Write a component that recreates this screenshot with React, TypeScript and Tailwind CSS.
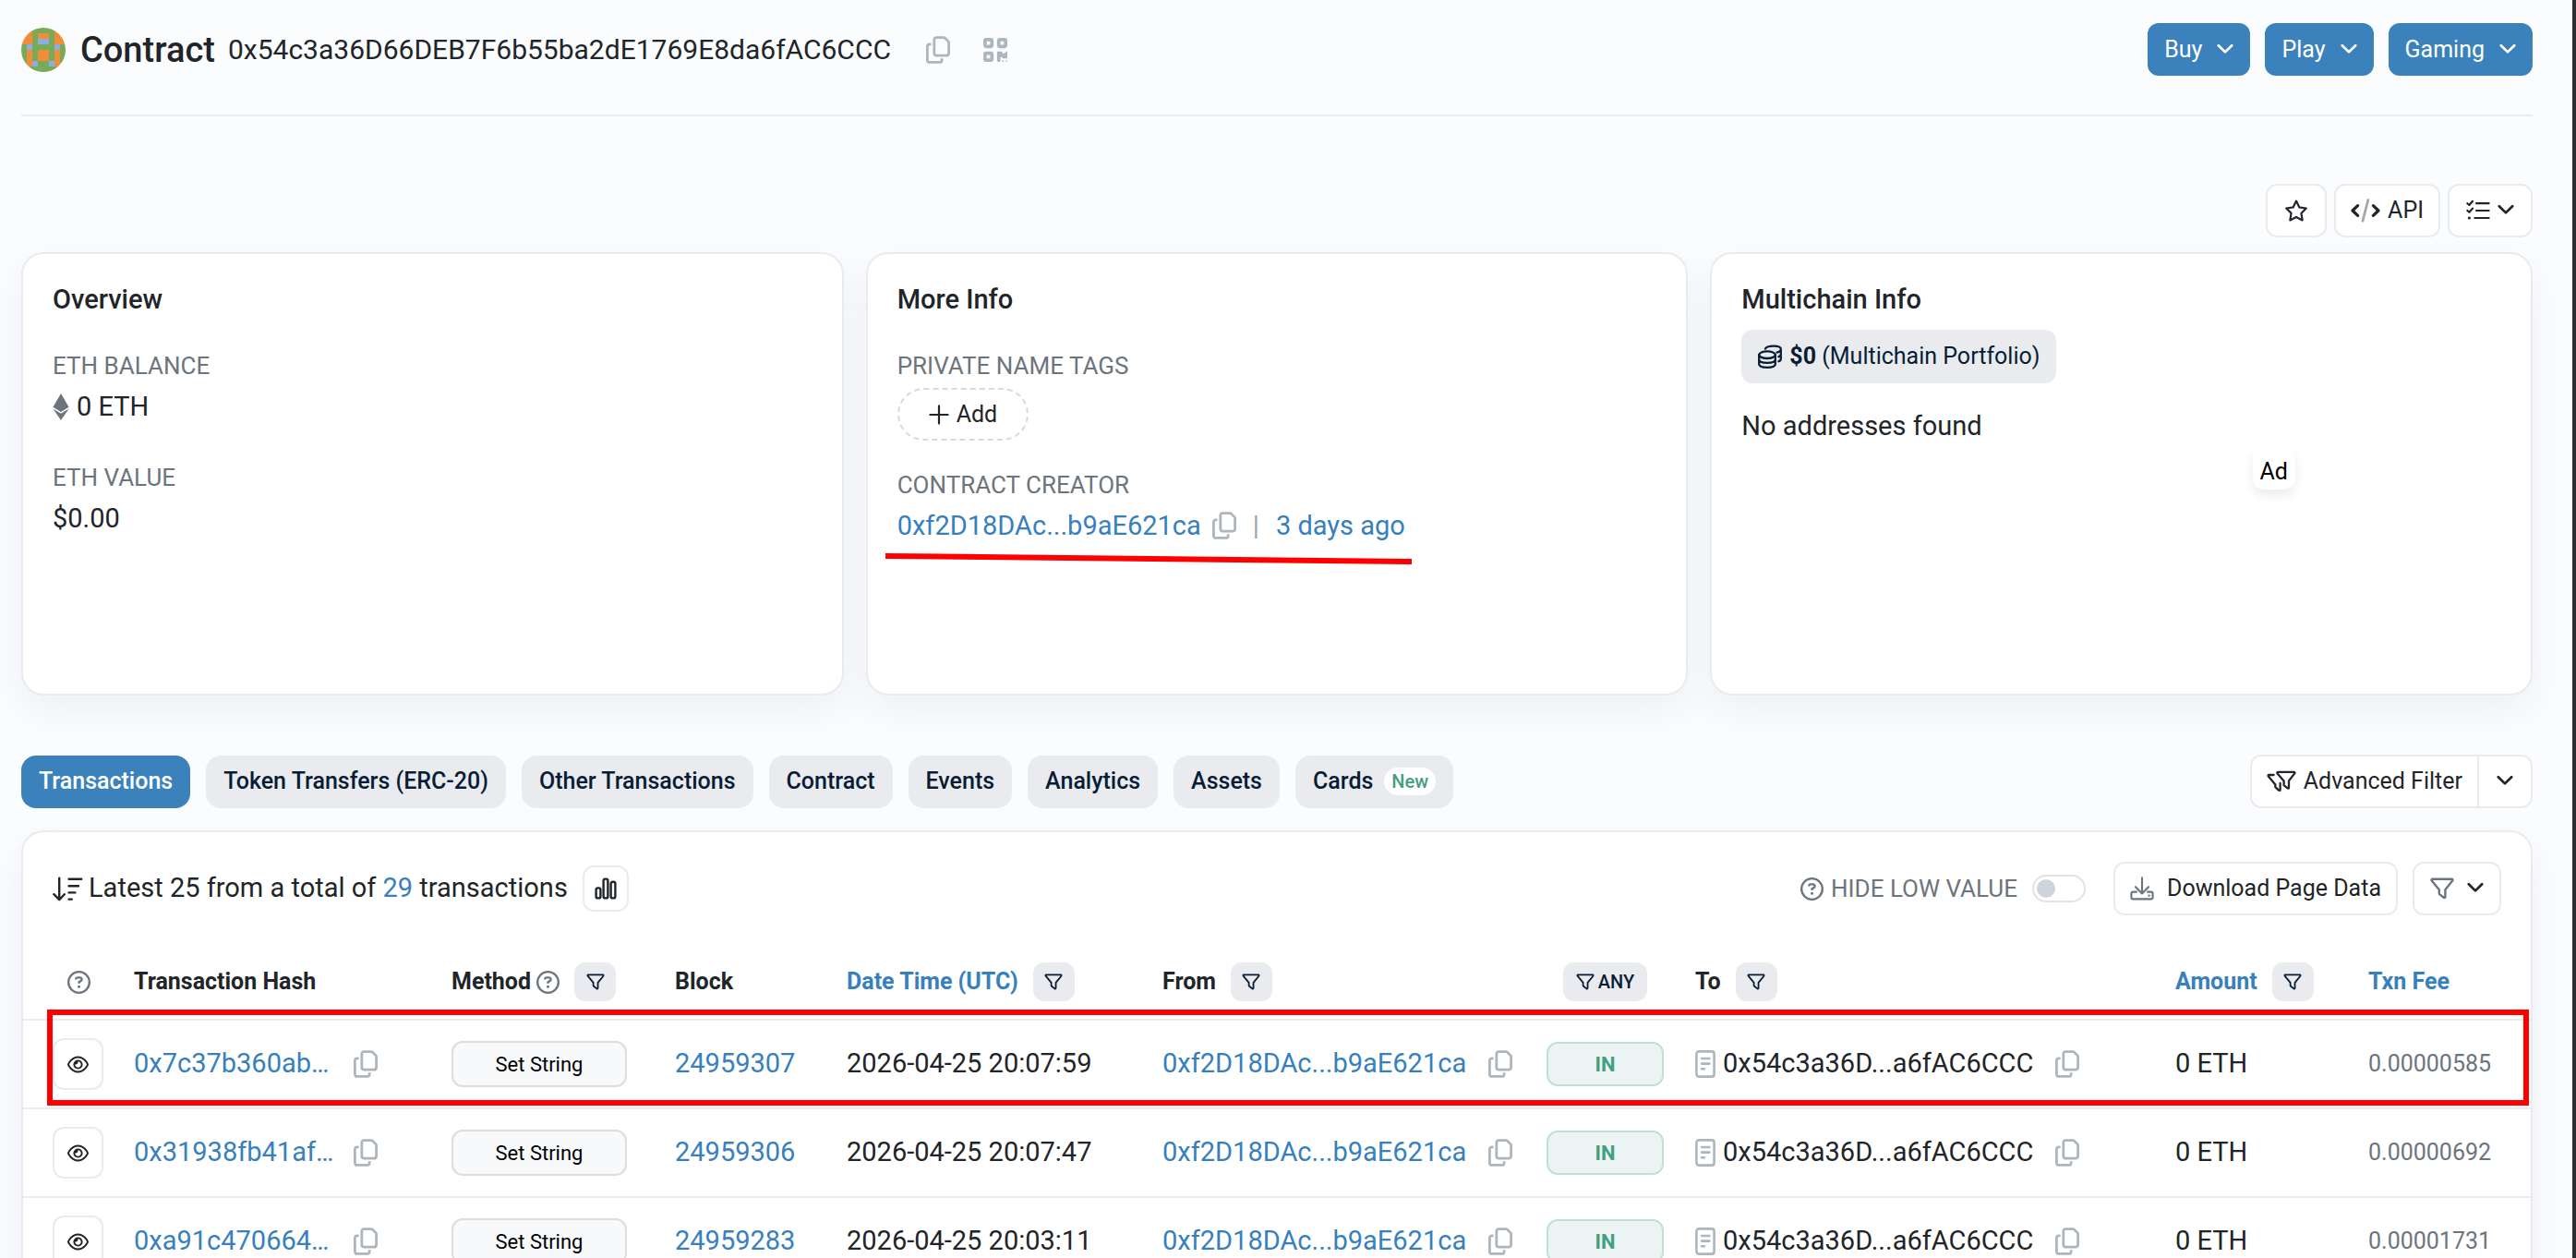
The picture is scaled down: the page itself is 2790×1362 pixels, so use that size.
import React from "react";
import clsx from "clsx";
import {
  FaEthereum,
  FaQrcode,
  FaRegCircleQuestion,
  FaRegCopy,
  FaRegEye,
  FaRegStar,
} from "react-icons/fa6";

interface Transaction {
  hash: string;
  block: string;
  date: string;
  fee: string;
}

const CREATOR = "0xf2D18DAc...b9aE621ca";

const transactions: Transaction[] = [
  { hash: "0x7c37b360ab…", block: "24959307", date: "2026-04-25 20:07:59", fee: "0.00000585" },
  { hash: "0x31938fb41af…", block: "24959306", date: "2026-04-25 20:07:47", fee: "0.00000692" },
  { hash: "0xa91c470664…", block: "24959283", date: "2026-04-25 20:03:11", fee: "0.00001731" },
];

const tabs = [
  "Transactions",
  "Token Transfers (ERC-20)",
  "Other Transactions",
  "Contract",
  "Events",
  "Analytics",
  "Assets",
  "Cards",
];

// 8x8 blockie, g = green, o = orange, b = blue
const blockie = [
  "ooggggoo",
  "oogoogoo",
  "oogbbgoo",
  "gbggggbg",
  "gogoogog",
  "gogoogog",
  "gobggbog",
  "gggggggg",
];

const blockieColors: Record<string, string> = { g: "#77ab57", o: "#f18c3b", b: "#8eaee3" };

const Identicon = () => (
  <svg viewBox="0 0 8 8" className="size-12 rounded-full" shapeRendering="crispEdges">
    {blockie.map((row, y) =>
      row.split("").map((c, x) => (
        <rect key={`${x}-${y}`} x={x} y={y} width="1" height="1" fill={blockieColors[c]} />
      ))
    )}
  </svg>
);

const Chevron = () => (
  <svg viewBox="0 0 18 18" className="size-[18px] shrink-0" fill="none" stroke="currentColor" strokeWidth="2.7" strokeLinecap="round" strokeLinejoin="round">
    <path d="M1.8 4.2 9 11.4 16.2 4.2" />
  </svg>
);

const Funnel = ({ className }: { className?: string }) => (
  <svg viewBox="0 0 26 24" className={clsx("shrink-0", className)} fill="none" stroke="currentColor" strokeWidth="2.4" strokeLinecap="round" strokeLinejoin="round">
    <path d="M2.4 1.8H23.6Q25 2 24.2 3.6L16.4 13.2V21Q16.2 22.6 14.8 21.8L10.4 18.4Q9.8 17.8 9.8 17V13.2L1.8 3.6Q1 2 2.4 1.8Z" />
  </svg>
);

const Funnels = () => (
  <svg viewBox="0 0 32 24" className="h-6 w-8 shrink-0" fill="none" stroke="currentColor" strokeWidth="2.3" strokeLinecap="round" strokeLinejoin="round">
    <path d="M12.2 1.8H29.6Q31 2 30.2 3.4L24 11.4V18.8Q23.8 20.2 22.6 19.4L18.6 16.2V11.4L11.6 3.4Q10.8 2 12.2 1.8Z" />
    <path d="M7.6 5H2.6Q1 5.2 1.8 6.6L9.4 15.4V18.2L13 21.6Q14.4 22.4 14.6 21V14" />
  </svg>
);

const Code = () => (
  <svg viewBox="0 0 32 26" className="h-[26px] w-8 shrink-0" fill="none" strokeLinecap="round" strokeLinejoin="round">
    <path d="M18.8 1.6 13 24.2" stroke="#a6a8aa" strokeWidth="2.8" />
    <path d="M7.6 7.6 2 13 7.6 18.4M24.4 7.6 30 13 24.4 18.4" stroke="currentColor" strokeWidth="3.2" />
  </svg>
);

const ListCheck = () => (
  <svg viewBox="0 0 26 24" className="h-6 w-[26px] shrink-0" fill="none" stroke="currentColor" strokeWidth="2.2" strokeLinecap="round" strokeLinejoin="round">
    <path d="M1.4 4.2 3.4 6 7 1.8M1.4 12 3.4 13.8 7 9.6M11 4.2H24.6M11 12H24.6M9.4 20H24.6" />
    <circle cx="3.4" cy="20" r="1.6" fill="currentColor" stroke="none" />
  </svg>
);

const Coins = () => (
  <svg viewBox="0 0 26 26" className="size-[26px] shrink-0" fill="none" stroke="currentColor" strokeWidth="2.3" strokeLinecap="round" strokeLinejoin="round">
    <ellipse cx="10" cy="11.2" rx="8.8" ry="3.8" />
    <path d="M1.2 11.2V21.2C1.2 26 18.8 26 18.8 21.2V11.2M1.2 16.2C1.2 21 18.8 21 18.8 16.2" />
    <path d="M8 4.6C10 .6 24.8 .6 24.8 5V15.4C24.8 16.8 23.8 17.8 22.4 18.2M24.8 5.2C24.8 7 23 8 20.4 8.6M24.8 10.4C24.8 11.8 23.8 12.8 22.4 13.2" />
  </svg>
);

const SortDown = () => (
  <svg viewBox="0 0 33 27" className="h-[27px] w-[33px] shrink-0" fill="none" stroke="currentColor" strokeWidth="2.4" strokeLinecap="round" strokeLinejoin="round">
    <path d="M7.2 1.6V25M1.4 19.2 7.2 25.2 12.8 19.2M17.6 2.8H31.2M17.6 10.2H28M17.6 17.4H24.4M17.6 24.6H20.8" />
  </svg>
);

const Bars = () => (
  <svg viewBox="0 0 24 24" className="size-6 shrink-0" fill="none" stroke="currentColor" strokeWidth="2.4">
    <rect x="1.6" y="11.4" width="4.8" height="11" rx="2" />
    <rect x="9.6" y="1.6" width="4.8" height="20.8" rx="2" />
    <rect x="17.6" y="4.8" width="4.8" height="17.6" rx="2" />
  </svg>
);

const DownloadTray = () => (
  <svg viewBox="0 0 26 26" className="size-[26px] shrink-0 text-[#6c757d]" fill="none" stroke="currentColor" strokeWidth="2.1" strokeLinecap="round" strokeLinejoin="round">
    <path d="M13 1.2V18.4M6 11.2 13 18.4 20 11.2M7 16.6H3.4Q1.4 16.6 1.4 18.6V22.4Q1.4 24.4 3.4 24.4H22.6Q24.6 24.4 24.6 22.4V18.6Q24.6 16.6 22.6 16.6H19" />
    <circle cx="20.6" cy="20.6" r="1.2" fill="currentColor" stroke="none" />
  </svg>
);

const ContractDoc = () => (
  <svg viewBox="0 0 22 30" className="h-[30px] w-[22px] shrink-0 text-[#adb5bd]" fill="none" stroke="currentColor" strokeWidth="2.6" strokeLinecap="round">
    <rect x="1.4" y="1.4" width="19.2" height="27.2" rx="2.6" />
    <path d="M7 9H15.4M7 14.6H15.4M7 20.2H10" />
  </svg>
);

const CopyButton = ({ label }: { label: string }) => (
  <button aria-label={`Copy ${label}`} className="shrink-0 text-[#adb5bd]">
    <FaRegCopy className="h-[30px] w-[26px]" />
  </button>
);

const FilterButton = ({ name }: { name: string }) => (
  <button aria-label={`Filter ${name}`} className="flex h-[42px] w-[45px] items-center justify-center rounded-[12px] bg-[#eaebef] text-[#081d35]">
    <Funnel className="h-[18px] w-5" />
  </button>
);

const outline = "flex h-[58px] items-center rounded-[12px] border-2 border-[#e9ebef] bg-white text-[#212529]";

const Card = ({ title, children }: { title: string; children: React.ReactNode }) => (
  <section className="relative flex min-h-[480px] flex-col items-start rounded-[24px] border-2 border-[#e9ebef] bg-white p-8 shadow-[0_16px_38px_rgba(189,197,209,0.2)]">
    <h2 className="text-[29px] leading-[34px] font-medium">{title}</h2>
    {children}
  </section>
);

const Label = ({ children }: { children: React.ReactNode }) => (
  <h3 className="text-[26px] leading-10 text-[#6c757d] uppercase">{children}</h3>
);

const Th = ({ name, blue, filter }: { name: string; blue?: boolean; filter?: boolean }) => (
  <th className="border-b-2 border-[#e9ebef] p-0 font-bold">
    <div className="flex items-center gap-4">
      {blue ? <a href="#" className="text-[#3780be]">{name}</a> : <span>{name}</span>}
      {filter && <FilterButton name={name} />}
    </div>
  </th>
);

const Row = ({ tx }: { tx: Transaction }) => (
  <tr className="h-24 *:border-b-2 *:border-[#e9ebef] *:p-0">
    <td>
      <button aria-label="Preview transaction" className="ml-8 flex h-14 w-[55px] items-center justify-center rounded-[12px] border-2 border-[#e9ebef]">
        <FaRegEye className="size-[23px]" />
      </button>
    </td>
    <td>
      <div className="flex items-center gap-6">
        <a href="#" className="w-[214px] text-[#3780be]">{tx.hash}</a>
        <CopyButton label="hash" />
      </div>
    </td>
    <td>
      <span className="flex h-[50px] w-[190px] items-center justify-center rounded-[12px] border-2 border-[#dcdfe2] bg-[#f8f9fb] text-[22px] text-black">
        Set String
      </span>
    </td>
    <td><a href="#" className="text-[#3780be]">{tx.block}</a></td>
    <td>{tx.date}</td>
    <td>
      <div className="flex items-center gap-6">
        <a href="#" className="text-[#3780be]">{CREATOR}</a>
        <CopyButton label="sender" />
      </div>
    </td>
    <td>
      <span className="flex h-12 w-[127px] items-center justify-center rounded-[12px] border-2 border-[#c1e0d5] bg-[#ebf4f3] text-[22px] font-bold text-[#449e80]">
        IN
      </span>
    </td>
    <td>
      <div className="flex items-center gap-6">
        <span className="flex items-center gap-2">
          <ContractDoc />
          0x54c3a36D...a6fAC6CCC
        </span>
        <CopyButton label="receiver" />
      </div>
    </td>
    <td>0 ETH</td>
    <td className="text-[25px] text-[#6c757d]">{tx.fee}</td>
  </tr>
);

const App = () => {
  return (
    <div className="h-screen overflow-hidden border-r-4 border-[#2b2d2e] bg-[#fbfcfe] pr-[43px] pl-[23px] font-[Roboto,sans-serif] text-[29px] whitespace-nowrap text-[#212529]">
      <header className="flex items-center justify-between border-b-2 border-[#e9ebee] pt-[25px] pb-[42px]">
        <div className="flex items-center">
          <Identicon />
          <h1 className="ml-4 text-[38px] leading-[50px] font-medium">Contract</h1>
          <span className="ml-[14px] text-[30px]">0x54c3a36D66DEB7F6b55ba2dE1769E8da6fAC6CCC</span>
          <div className="ml-[38px] flex items-center gap-9 text-[#adb5bd]">
            <CopyButton label="address" />
            <button aria-label="Show QR code">
              <FaQrcode className="h-[30px] w-[26px]" />
            </button>
          </div>
        </div>
        <div className="flex gap-4">
          {["Buy", "Play", "Gaming"].map((name) => (
            <button key={name} className="flex h-[57px] items-center gap-4 rounded-[12px] bg-[#3b82bd] px-[18px] text-[25px] text-white">
              {name}
              <Chevron />
            </button>
          ))}
        </div>
      </header>

      <div className="mt-[73px] flex justify-end gap-2 text-[25px]">
        <button aria-label="Add to favourites" className={clsx(outline, "px-[18px]")}>
          <FaRegStar className="size-[26px]" />
        </button>
        <button className={clsx(outline, "gap-2 px-4")}>
          <Code />
          API
        </button>
        <button aria-label="More options" className={clsx(outline, "gap-2 px-[18px]")}>
          <ListCheck />
          <Chevron />
        </button>
      </div>

      <div className="mt-4 grid grid-cols-3 gap-6">
        <Card title="Overview">
          <div className="mt-[35px] flex flex-col gap-[33px]">
            <div>
              <Label>ETH Balance</Label>
              <div className="flex items-center gap-2 leading-[48px]">
                <FaEthereum className="h-[29px] w-[18px] text-[#6c757d]" />
                0 ETH
              </div>
            </div>
            <div>
              <Label>ETH Value</Label>
              <div className="leading-[48px]">$0.00</div>
            </div>
          </div>
        </Card>

        <Card title="More Info">
          <div className="mt-[35px] flex flex-col gap-7">
            <div>
              <Label>Private Name Tags</Label>
              <button className="mt-1 flex h-[57px] items-center gap-2 rounded-full border-2 border-dashed border-[#d8dadc] px-8 text-[25px]">
                <svg viewBox="0 0 22 22" className="size-[22px]" stroke="currentColor" strokeWidth="2.2" strokeLinecap="round">
                  <path d="M11 1.4V20.6M1.4 11H20.6" />
                </svg>
                Add
              </button>
            </div>
            <div className="relative">
              <Label>Contract Creator</Label>
              <div className="flex items-center leading-[48px]">
                <a href="#" className="mr-3 text-[#3780be]">{CREATOR}</a>
                <CopyButton label="creator" />
                <span className="mx-[18px] text-[#9aa2aa]">|</span>
                <a href="#" className="text-[#3780be]">3 days ago</a>
              </div>
              <svg viewBox="0 0 570 12" className="absolute top-[94px] -left-[13px] h-3 w-[570px]">
                <path d="M0 0 570 6V12L0 6Z" fill="#ff0000" />
              </svg>
            </div>
          </div>
        </Card>

        <Card title="Multichain Info">
          <button className="mt-4 flex h-[58px] items-center gap-2 rounded-[12px] bg-[#eaebef] px-[18px] text-[25px] text-[#081d35]">
            <Coins />
            <span><span className="font-bold">$0</span> (Multichain Portfolio)</span>
          </button>
          <p className="mt-6 leading-[44px]">No addresses found</p>
          <span className="absolute top-[209px] left-[66%] rounded-[12px] bg-white px-2 pt-2 text-[25px] leading-[38px] text-black shadow-[0_6px_12px_rgba(0,0,0,0.08)]">
            Ad
          </span>
        </Card>
      </div>

      <div className="mt-16 flex items-center justify-between text-[25px]">
        <nav className="flex gap-[17px]">
          {tabs.map((tab, i) => (
            <button
              key={tab}
              className={clsx(
                "flex h-[57px] items-center gap-3 rounded-[16px] px-[19px] font-medium",
                i === 0 ? "bg-[#3b82bd] text-white" : "bg-[#eaebef] text-[#081d35]"
              )}
            >
              {tab}
              {tab === "Cards" && (
                <span className="rounded-full bg-white px-2 text-[20px] leading-[30px] text-[#449e80]">New</span>
              )}
            </button>
          ))}
        </nav>
        <div className="flex">
          <button className={clsx(outline, "gap-2 rounded-r-none px-4")}>
            <Funnels />
            Advanced Filter
          </button>
          <button aria-label="Advanced filter options" className={clsx(outline, "rounded-l-none border-l-0 px-[19px]")}>
            <Chevron />
          </button>
        </div>
      </div>

      <section className="mt-6 rounded-t-[24px] border-2 border-b-0 border-[#e9ebef] bg-white shadow-[0_16px_38px_rgba(189,197,209,0.2)]">
        <div className="flex items-center justify-between p-8">
          <div className="flex items-center">
            <SortDown />
            <p className="ml-[6px]">
              Latest 25 from a total of <a href="#" className="text-[#3780be]">29</a> transactions
            </p>
            <button aria-label="Show chart" className="ml-4 flex size-[50px] items-center justify-center rounded-[12px] border-2 border-[#e9ebef]">
              <Bars />
            </button>
          </div>
          <div className="flex items-center text-[25px]">
            <label htmlFor="hide-low" className="flex items-center gap-2 text-[26px] text-[#6c757d]">
              <FaRegCircleQuestion className="size-[25px]" />
              HIDE LOW VALUE
            </label>
            <input
              id="hide-low"
              type="checkbox"
              className="ml-4 h-[30px] w-[58px] appearance-none rounded-full border-2 border-[#dfe2e6] bg-white p-[3px] before:block before:size-5 before:rounded-full before:bg-[#ced4da]"
            />
            <button className={clsx(outline, "ml-[30px] gap-[14px] px-4")}>
              <DownloadTray />
              Download Page Data
            </button>
            <button aria-label="Filter transactions" className={clsx(outline, "ml-4 gap-[14px] px-[17px]")}>
              <Funnel className="h-6 w-[26px] text-[#6c757d]" />
              <Chevron />
            </button>
          </div>
        </div>

        <div className="relative">
          <table className="w-full table-fixed border-separate border-spacing-0 text-left">
            <colgroup>
              <col className="w-[120px]" />
              <col className="w-[344px]" />
              <col className="w-[242px]" />
              <col className="w-[186px]" />
              <col className="w-[342px]" />
              <col className="w-[416px]" />
              <col className="w-[161px]" />
              <col className="w-[520px]" />
              <col className="w-[209px]" />
              <col className="w-[176px]" />
            </colgroup>
            <thead>
              <tr className="h-[82px] text-[25px]">
                <th className="border-b-2 border-[#e9ebef] p-0">
                  <FaRegCircleQuestion className="ml-12 size-[25px] text-[#6c757d]" />
                </th>
                <Th name="Transaction Hash" />
                <th className="border-b-2 border-[#e9ebef] p-0 font-bold">
                  <div className="flex items-center">
                    Method
                    <FaRegCircleQuestion className="mr-4 ml-[6px] size-[25px] text-[#6c757d]" />
                    <FilterButton name="Method" />
                  </div>
                </th>
                <Th name="Block" />
                <Th name="Date Time (UTC)" blue filter />
                <Th name="From" filter />
                <th className="border-b-2 border-[#e9ebef] p-0 font-medium">
                  <div className="flex w-[127px] justify-center">
                    <button className="flex h-[42px] items-center gap-1 rounded-[12px] bg-[#eaebef] px-[14px] text-[20px] text-[#081d35]">
                      <Funnel className="h-[18px] w-5" />
                      ANY
                    </button>
                  </div>
                </th>
                <Th name="To" filter />
                <Th name="Amount" blue filter />
                <Th name="Txn Fee" blue />
              </tr>
            </thead>
            <tbody>
              {transactions.map((tx) => (
                <Row key={tx.hash} tx={tx} />
              ))}
            </tbody>
          </table>
          {/* highlight around the newest transaction */}
          <div className="pointer-events-none absolute top-[70px] right-[2px] left-[26px] h-[104px] border-6 border-[#ff0000]" />
        </div>
      </section>
    </div>
  );
};

export default App;
